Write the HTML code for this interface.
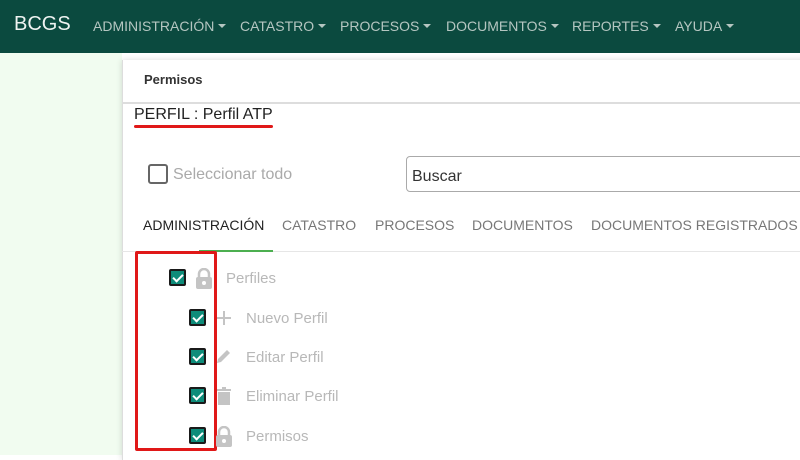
<!DOCTYPE html>
<html><head><meta charset="utf-8"><style>
*{margin:0;padding:0;box-sizing:border-box}
body{width:800px;height:455px;overflow:hidden;background:#fff;font-family:"Liberation Sans",sans-serif;position:relative}
.nav{position:absolute;left:0;top:0;width:800px;height:53px;background:#0b4a3f;color:#b5c6c1;font-size:14px}
.nav .brand{position:absolute;left:14px;top:13px;font-size:20px;color:#eef3f1}
.nav span.i{position:absolute;top:18px}
.car{display:inline-block;border-left:4px solid transparent;border-right:4px solid transparent;border-top:4px solid #b5c6c1;vertical-align:middle;margin-left:4px;margin-top:-2px}
.side{position:absolute;left:0;top:53px;width:122px;height:402px;background:#f1fcf0}
.card{position:absolute;left:122px;top:60px;width:690px;height:400px;background:#fff;border-left:1px solid #ddd;box-shadow:0 0 6px rgba(0,0,0,.15)}
.hdr{position:absolute;left:0;top:0;width:100%;height:44px;border-bottom:2px solid #ddd;background:#fff}
.hdr b{position:absolute;left:21px;top:12px;font-size:13px;color:#333}
.abs{position:absolute}
.cb{position:absolute;width:17px;height:17px;background:#0e8c7a;border:2px solid #1a1a1a;border-radius:2px}
.cb:after{content:"";position:absolute;left:4px;top:1px;width:4px;height:8px;border:solid #fff;border-width:0 2px 2px 0;transform:rotate(45deg)}
.lbl{position:absolute;font-size:15px;color:#b8b8b8}
.tab{position:absolute;top:217px;font-size:14px;color:#777}
</style></head><body>
<div class="nav"><div class="brand">BCGS</div>
<span class="i" style="left:93px">ADMINISTRACIÓN<i class="car"></i></span>
<span class="i" style="left:240px">CATASTRO<i class="car"></i></span>
<span class="i" style="left:340px">PROCESOS<i class="car"></i></span>
<span class="i" style="left:446px">DOCUMENTOS<i class="car"></i></span>
<span class="i" style="left:572px">REPORTES<i class="car"></i></span>
<span class="i" style="left:675px">AYUDA<i class="car"></i></span>
</div>
<div class="side"></div>
<div class="card"><div class="hdr"><b>Permisos</b></div></div>
<div class="abs" style="left:134px;top:106px;font-size:16px;color:#222">PERFIL : Perfil ATP</div>
<div class="abs" style="left:134px;top:125px;width:139px;height:3px;background:#e01818;border-radius:2px"></div>
<div class="abs" style="left:148px;top:164px;width:20px;height:20px;border:2px solid #666;border-radius:3px"></div>
<div class="abs" style="left:173px;top:166px;font-size:16px;color:#aaa">Seleccionar todo</div>
<div class="abs" style="left:406px;top:156px;width:400px;height:36px;border:1px solid #aaa;border-radius:4px;font-size:16px;color:#333;padding:11px 0 0 5px">Buscar</div>
<div class="tab" style="left:143px;color:#222">ADMINISTRACIÓN</div>
<div class="tab" style="left:282px">CATASTRO</div>
<div class="tab" style="left:375px">PROCESOS</div>
<div class="tab" style="left:472px">DOCUMENTOS</div>
<div class="tab" style="left:591px">DOCUMENTOS REGISTRADOS</div>
<div class="abs" style="left:122px;top:251px;width:680px;height:1px;background:#e6e6e6"></div>
<div class="abs" style="left:199px;top:250px;width:74px;height:2px;background:#4caf50"></div>
<div class="abs" style="left:135px;top:251px;width:82px;height:200px;border:3px solid #e01818;border-radius:2px"></div>
<div class="cb" style="left:169px;top:269px"></div>
<div class="cb" style="left:189px;top:309px"></div>
<div class="cb" style="left:189px;top:348px"></div>
<div class="cb" style="left:189px;top:387px"></div>
<div class="cb" style="left:189px;top:427px"></div>
<svg class="abs" style="left:195px;top:268px" width="18" height="22" viewBox="0 0 18 22"><path d="M4 9V6a5 5 0 0 1 10 0v3" fill="none" stroke="#c4c4c4" stroke-width="2.5"/><rect x="1" y="9" width="16" height="12" rx="2" fill="#c4c4c4"/><circle cx="9" cy="15" r="2" fill="#fff"/></svg>
<svg class="abs" style="left:216px;top:310px" width="16" height="16"><path d="M8 1v14M1 8h14" stroke="#c4c4c4" stroke-width="2"/></svg>
<svg class="abs" style="left:215px;top:347px" width="18" height="18"><path d="M2 16l1-4 9-9 3 3-9 9z" fill="#c4c4c4"/></svg>
<svg class="abs" style="left:216px;top:386px" width="16" height="20"><rect x="1" y="3" width="14" height="2" fill="#c4c4c4"/><rect x="6" y="1" width="4" height="2" fill="#c4c4c4"/><rect x="2" y="6" width="12" height="13" fill="#c4c4c4"/></svg>
<svg class="abs" style="left:215px;top:426px" width="18" height="22" viewBox="0 0 18 22"><path d="M4 9V6a5 5 0 0 1 10 0v3" fill="none" stroke="#c4c4c4" stroke-width="2.5"/><rect x="1" y="9" width="16" height="12" rx="2" fill="#c4c4c4"/><circle cx="9" cy="15" r="2" fill="#fff"/></svg>
<div class="lbl" style="left:226px;top:270px">Perfiles</div>
<div class="lbl" style="left:246px;top:310px">Nuevo Perfil</div>
<div class="lbl" style="left:246px;top:349px">Editar Perfil</div>
<div class="lbl" style="left:246px;top:388px">Eliminar Perfil</div>
<div class="lbl" style="left:246px;top:428px">Permisos</div>
</body></html>
